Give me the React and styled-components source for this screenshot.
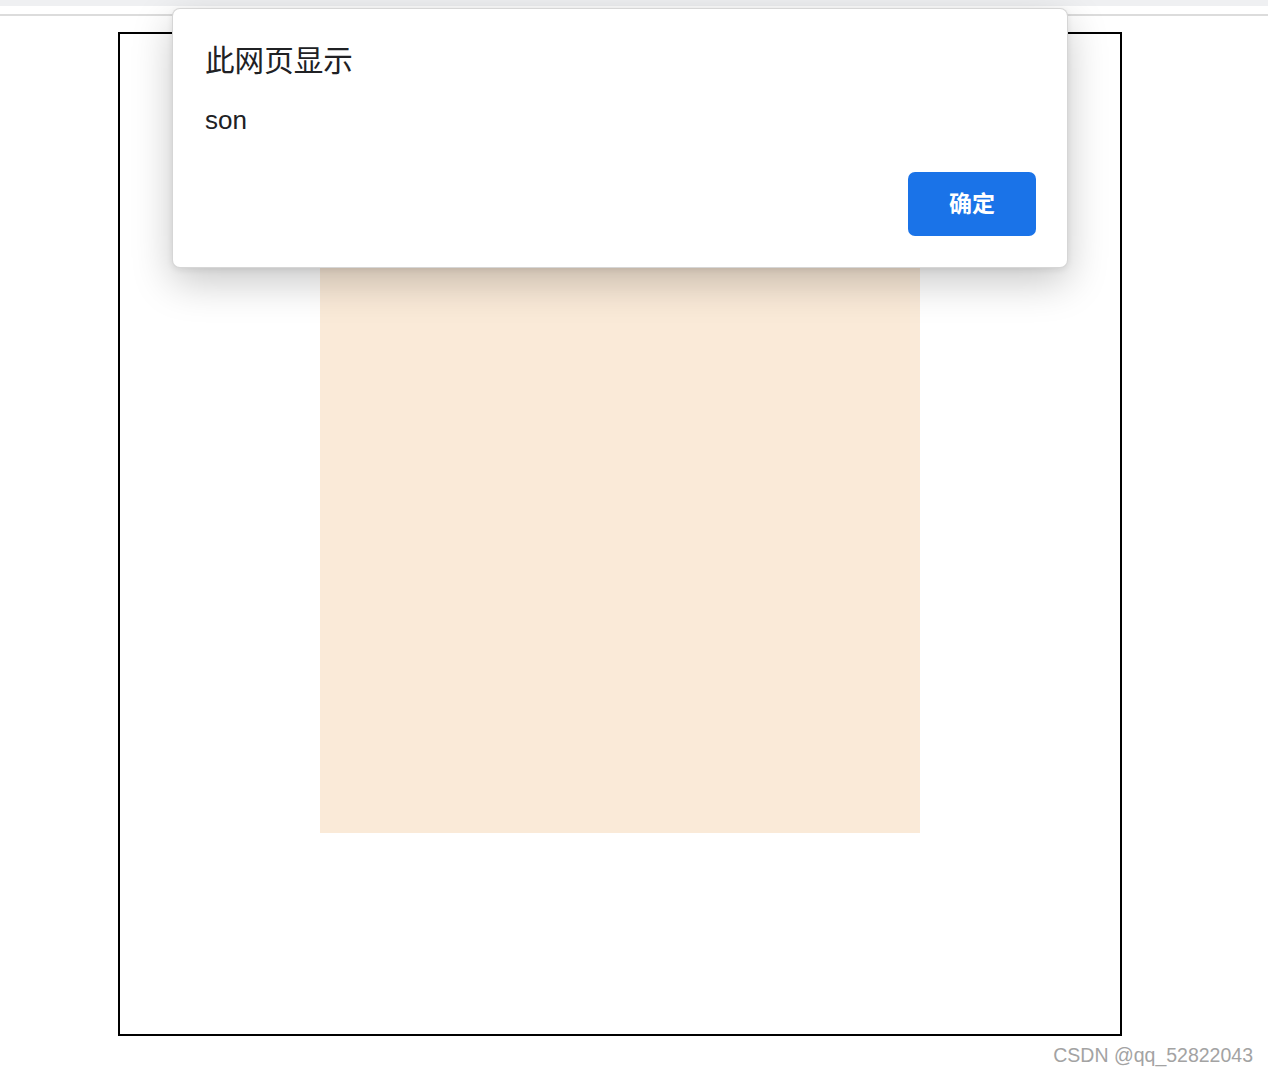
import styled, { createGlobalStyle } from 'styled-components'

const GlobalStyle = createGlobalStyle`
  html, body {
    margin: 0;
    padding: 0;
    background: #fff;
    font-family: "Liberation Sans", "Noto Sans CJK SC", sans-serif;
  }
`

const Page = styled.div`
  position: relative;
  width: 1268px;
  height: 1076px;
  overflow: hidden;
  background: #fff;
`

const TopBar = styled.div`
  height: 6px;
  background: #eff0f2;
`

const TopLine = styled.div`
  margin-top: 8px;
  height: 2px;
  background: #dcdcdc;
`

const Father = styled.div`
  margin: 16px 0 0 118px;
  width: 1004px;
  height: 1004px;
  box-sizing: border-box;
  border: 2px solid #000;
  padding: 199px 200px 0;
`

const Son = styled.div`
  width: 600px;
  height: 600px;
  background: #faead8;
`

const Dialog = styled.div`
  position: absolute;
  left: 172px;
  top: 8px;
  width: 896px;
  height: 260px;
  box-sizing: border-box;
  background: #fff;
  border: 1px solid rgba(0, 0, 0, 0.16);
  border-radius: 8px;
  box-shadow: 0 14px 40px rgba(0, 0, 0, 0.22), 0 2px 6px rgba(0, 0, 0, 0.08);
  padding: 32px 31px 31px 32px;
  display: flex;
  flex-direction: column;
`

const Title = styled.div`
  font-family: "Noto Sans CJK SC", sans-serif;
  font-size: 29.6px;
  line-height: 36px;
  color: #202124;
`

const Message = styled.div`
  margin-top: 27px;
  font-family: "Liberation Sans", "Noto Sans CJK SC", sans-serif;
  font-size: 26px;
  line-height: 32px;
  color: #202124;
`

const Actions = styled.div`
  margin-top: auto;
  display: flex;
  justify-content: flex-end;
`

const Button = styled.button`
  width: 128px;
  height: 64px;
  border: none;
  border-radius: 7px;
  background: #1a73e8;
  color: #fff;
  font-family: "Noto Sans CJK SC", sans-serif;
  font-weight: 700;
  font-size: 23px;
  padding: 0 0 4px;
  cursor: pointer;
`

const Watermark = styled.div`
  position: absolute;
  right: 15px;
  top: 1043px;
  font-family: "Liberation Sans", sans-serif;
  font-size: 19.5px;
  line-height: 24px;
  color: #a3a3a3;
`

export default function App() {
  return (
    <Page>
      <GlobalStyle />
      <TopBar />
      <TopLine />
      <Father>
        <Son />
      </Father>
      <Dialog>
        <Title>此网页显示</Title>
        <Message>son</Message>
        <Actions>
          <Button>确定</Button>
        </Actions>
      </Dialog>
      <Watermark>CSDN @qq_52822043</Watermark>
    </Page>
  )
}
